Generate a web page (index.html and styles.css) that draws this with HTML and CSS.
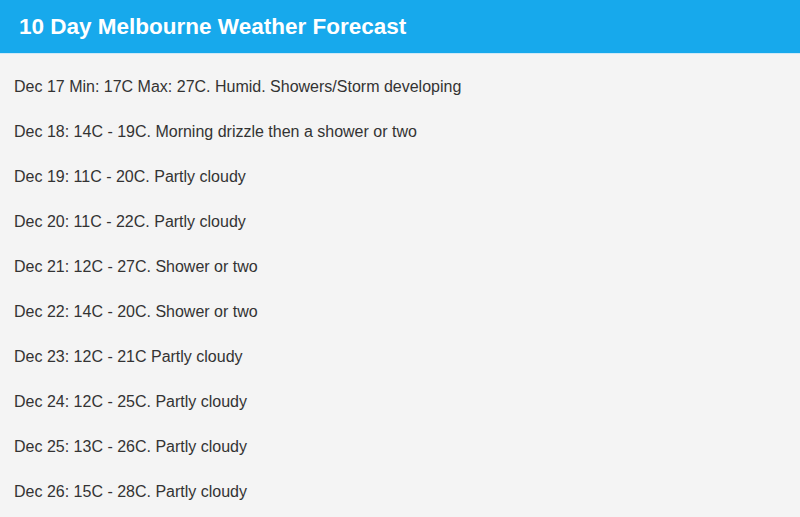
FILE: index.html
```html
<!DOCTYPE html>
<html>
<head>
<meta charset="utf-8">
<link rel="stylesheet" href="styles.css">
</head>
<body>
<header class="header"><h1 class="title">10 Day Melbourne Weather Forecast</h1></header>
<main class="list">
<p class="row">Dec 17 Min: 17C Max: 27C. Humid. Showers/Storm developing</p>
<p class="row">Dec 18: 14C - 19C. Morning drizzle then a shower or two</p>
<p class="row">Dec 19: 11C - 20C. Partly cloudy</p>
<p class="row">Dec 20: 11C - 22C. Partly cloudy</p>
<p class="row">Dec 21: 12C - 27C. Shower or two</p>
<p class="row">Dec 22: 14C - 20C. Shower or two</p>
<p class="row">Dec 23: 12C - 21C Partly cloudy</p>
<p class="row">Dec 24: 12C - 25C. Partly cloudy</p>
<p class="row">Dec 25: 13C - 26C. Partly cloudy</p>
<p class="row">Dec 26: 15C - 28C. Partly cloudy</p>
</main>
</body>
</html>
```

FILE: styles.css
```css
html, body {
  margin: 0;
  padding: 0;
  background: #f4f4f4;
  font-family: "Liberation Sans", Arial, sans-serif;
}
.header {
  background: #17a9ec;
  height: 54px;
  display: flex;
  align-items: center;
  padding: 0 19px;
  border-bottom: 1px solid #cfe9f7;
  box-sizing: border-box;
}
.title {
  margin: 0;
  color: #ffffff;
  font-size: 22.5px;
  font-weight: bold;
}
.list {
  padding: 10px 14px 0;
}
.row {
  margin: 0;
  height: 45px;
  line-height: 45px;
  font-size: 16px;
  color: #333333;
}
```
